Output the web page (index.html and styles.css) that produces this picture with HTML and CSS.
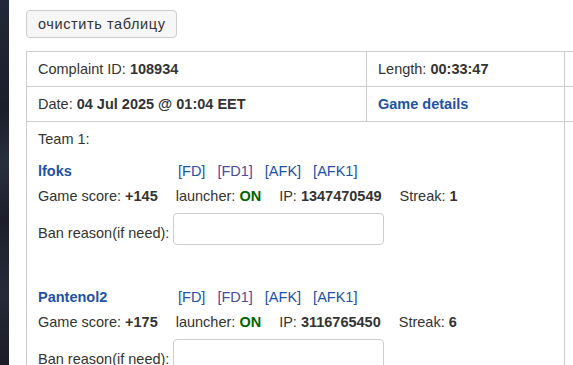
FILE: index.html
```html
<!DOCTYPE html>
<html lang="ru">

<head>
    <meta charset="UTF-8">
    <meta name="viewport" content="width=device-width, initial-scale=1.0">
    <title>Complaint</title>
    <link rel="stylesheet" href="styles.css">
</head>

<body>
    <div class="page">
        <div class="side"></div>
        <div class="main">
            <button class="btn">очистить таблицу</button>
            <table class="complaint">
                <tr>
                    <td class="c1">Complaint ID: <b>108934</b></td>
                    <td class="c2">Length: <b>00:33:47</b></td>
                    <td class="c3"></td>
                </tr>
                <tr>
                    <td>Date: <b>04 Jul 2025 @ 01:04 EET</b></td>
                    <td><a class="details" href="#">Game details</a></td>
                    <td></td>
                </tr>
                <tr>
                    <td colspan="2" class="team">
                        <div class="team-title">Team 1:</div>

                        <div class="player">
                            <div class="player-head">
                                <a class="nick" href="#">lfoks</a>
                                <div class="marks">
                                    <a href="#">[FD]</a>
                                    <a href="#" class="visited">[FD1]</a>
                                    <a href="#">[AFK]</a>
                                    <a href="#">[AFK1]</a>
                                </div>
                            </div>
                            <div class="stats">
                                <span>Game score: <b>+145</b></span>
                                <span>launcher: <b class="on">ON</b></span>
                                <span>IP: <b>1347470549</b></span>
                                <span>Streak: <b>1</b></span>
                            </div>
                            <div class="ban">
                                <label>Ban reason(if need):</label>
                                <input type="text">
                            </div>
                        </div>

                        <div class="player">
                            <div class="player-head">
                                <a class="nick" href="#">Pantenol2</a>
                                <div class="marks">
                                    <a href="#">[FD]</a>
                                    <a href="#" class="visited">[FD1]</a>
                                    <a href="#">[AFK]</a>
                                    <a href="#">[AFK1]</a>
                                </div>
                            </div>
                            <div class="stats">
                                <span>Game score: <b>+175</b></span>
                                <span>launcher: <b class="on">ON</b></span>
                                <span>IP: <b>3116765450</b></span>
                                <span>Streak: <b>6</b></span>
                            </div>
                            <div class="ban">
                                <label>Ban reason(if need):</label>
                                <input type="text">
                            </div>
                        </div>
                    </td>
                    <td></td>
                </tr>
            </table>
        </div>
    </div>
</body>

</html>
```

FILE: styles.css
```css
body {
    margin: 0;
    overflow: hidden;
    font-family: "Liberation Sans", Arial, sans-serif;
    font-size: 14.5px;
    line-height: 20px;
    color: #333;
    background: #fff;
}

.page {
    display: flex;
    height: 100vh;
}

.side {
    width: 9px;
    flex-shrink: 0;
    background: linear-gradient(160deg, #23283a 0%, #1b1e2a 30%, #2a2f3f 45%, #1c1f2b 60%, #262a38 80%, #1a1c27 100%);
}

.main {
    padding: 10px 0 0 17px;
}

.btn {
    font-family: inherit;
    font-size: 14.5px;
    letter-spacing: 0.6px;
    color: #333;
    background: #f6f6f6;
    border: 1px solid #ccc;
    border-radius: 4px;
    padding: 3px 11px;
    width: 151px;
    height: 28px;
    line-height: 20px;
    white-space: nowrap;
}

.complaint {
    margin-top: 13px;
    border-collapse: collapse;
    width: 700px;
}

.complaint td {
    border: 1px solid #ccc;
    padding: 7px 11px;
    vertical-align: top;
    white-space: nowrap;
}

.c1 {
    width: 317px;
}

.c2 {
    width: 175px;
}

a {
    color: #2152a3;
    text-decoration: none;
}

a.visited {
    color: #4f4a9e;
}

.details {
    font-weight: bold;
}

.team {
    padding-bottom: 0;
}

.team-title {
    margin-bottom: 12px;
}

.player {
    margin-bottom: 42px;
}

.player-head {
    display: flex;
}

.nick {
    width: 140px;
    font-weight: bold;
}

.marks {
    display: flex;
    gap: 12px;
}

.stats {
    display: flex;
    gap: 18px;
    margin-top: 5px;
}

.on {
    color: #006400;
}

.ban {
    margin-top: 7px;
    display: flex;
    align-items: flex-end;
    gap: 4px;
}

.ban label {
    line-height: 20px;
    padding-bottom: 2px;
}

.ban input {
    width: 211px;
    height: 32px;
    box-sizing: border-box;
    border: 1px solid #ccc;
    border-radius: 4px;
    font-family: inherit;
    font-size: 14px;
}
```
